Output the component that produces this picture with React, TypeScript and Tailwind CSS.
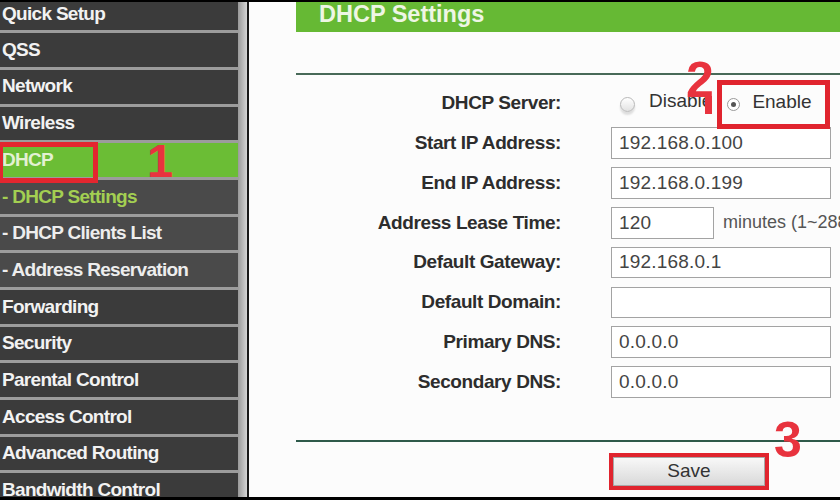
import React from 'react'

const font = { fontFamily: '"Liberation Sans", Arial, sans-serif' }

type NavItem = { label: string; kind: 'main' | 'active' | 'sub' | 'subActive' }

const navItems: NavItem[] = [
  { label: 'Quick Setup', kind: 'main' },
  { label: 'QSS', kind: 'main' },
  { label: 'Network', kind: 'main' },
  { label: 'Wireless', kind: 'main' },
  { label: 'DHCP', kind: 'active' },
  { label: '- DHCP Settings', kind: 'subActive' },
  { label: '- DHCP Clients List', kind: 'sub' },
  { label: '- Address Reservation', kind: 'sub' },
  { label: 'Forwarding', kind: 'main' },
  { label: 'Security', kind: 'main' },
  { label: 'Parental Control', kind: 'main' },
  { label: 'Access Control', kind: 'main' },
  { label: 'Advanced Routing', kind: 'main' },
  { label: 'Bandwidth Control', kind: 'main' },
]

const fields = [
  { label: 'Start IP Address:', value: '192.168.0.100' },
  { label: 'End IP Address:', value: '192.168.0.199' },
  { label: 'Address Lease Time:', value: '120', lease: true },
  { label: 'Default Gateway:', value: '192.168.0.1' },
  { label: 'Default Domain:', value: '' },
  { label: 'Primary DNS:', value: '0.0.0.0' },
  { label: 'Secondary DNS:', value: '0.0.0.0' },
]

function NavRow({ item, first }: { item: NavItem; first: boolean }) {
  const bg =
    item.kind === 'active'
      ? 'bg-[#6bbd35] text-[#e3f1d2]'
      : item.kind === 'sub'
        ? 'bg-[#4a4a4a] text-[#ededed]'
        : item.kind === 'subActive'
          ? 'bg-[#4a4a4a] text-[#a3cf52]'
          : 'bg-[#3b3b3b] text-[#f2f2f2]'
  return (
    <div
      className={`shrink-0 flex items-center box-border border-b-[3px] border-[#9c9c9c] pl-[2px] whitespace-nowrap font-bold text-[19px] tracking-[-0.7px] ${bg} ${
        first ? 'h-[31.2px] pb-[4px]' : 'h-[36.7px]'
      }`}
    >
      {item.label}
    </div>
  )
}

function Field({ label, value, lease }: { label: string; value: string; lease?: boolean }) {
  return (
    <>
      <div className="flex items-center justify-end h-[31.5px] font-bold text-[19px] tracking-[-0.4px] text-[#2d2d2d] whitespace-nowrap">
        {label}
      </div>
      <div className="flex items-center h-[31.5px] whitespace-nowrap">
        <div
          className={`shrink-0 h-[31.5px] box-border border border-[#a3a3a3] bg-white flex items-center pl-[7px] text-[19px] tracking-[0.2px] text-[#444] ${
            lease ? 'w-[103px]' : 'w-[220px]'
          }`}
        >
          {value}
        </div>
        {lease && <span className="ml-[9px] text-[18px] text-[#555]">minutes (1~2880)</span>}
      </div>
    </>
  )
}

export default function App() {
  return (
    <div className="relative w-[840px] h-[500px] overflow-hidden bg-[#fcfcfc] flex flex-col" style={font}>
      <div className="h-[2px] bg-black shrink-0" />

      <div className="flex flex-1 min-h-0">
        <aside className="w-[238px] shrink-0 flex flex-col overflow-hidden bg-[#3b3b3b]">
          {navItems.map((item, i) => (
            <NavRow key={item.label} item={item} first={i === 0} />
          ))}
        </aside>
        <div className="w-[9px] shrink-0 bg-gradient-to-r from-[#9a9a9a] to-[#d6d6d6]" />
        <div className="w-[1.5px] shrink-0 bg-[#1a1a1a]" />

        <main className="flex-1 min-w-0 pl-[47.5px] flex flex-col">
          <div className="shrink-0 h-[30px] bg-[#66b934] flex items-center pl-[23px] pb-[5px] font-bold text-[23.5px] text-[#eef6e4] whitespace-nowrap">
            DHCP Settings
          </div>
          <div className="shrink-0 mt-[40.7px] h-[2px] bg-[#486a58]" />

          <div className="mt-[13px] grid grid-cols-[265px_1fr] gap-x-[50px] gap-y-[8.3px]">
            <div className="flex items-center justify-end h-[31.5px] font-bold text-[19px] tracking-[-0.4px] text-[#2d2d2d]">
              DHCP Server:
            </div>
            <div className="flex items-center h-[31.5px] whitespace-nowrap text-[19px] text-[#333]">
              <span className="ml-[9px] mt-[2px] w-[15px] h-[15px] rounded-full border border-[#b8b8b8] bg-gradient-to-b from-white to-[#e2e2e2] shadow-[0_3px_2px_rgba(0,0,0,0.12)]" />
              <span className="ml-[14px] -mt-[4px]">Disable</span>
              <span className="ml-[15px] mt-[2px] w-[13px] h-[13px] rounded-full border border-[#9a9a9a] bg-white flex items-center justify-center">
                <span className="w-[5px] h-[5px] rounded-full bg-[#555]" />
              </span>
              <span className="ml-[12px] -mt-[2px]">Enable</span>
            </div>
            {fields.map((f) => (
              <Field key={f.label} {...f} />
            ))}
          </div>

          <div className="shrink-0 mt-[42px] h-[2px] bg-[#2e5a4a]" />

          <div className="shrink-0 mt-[11.2px] ml-[313px] w-[160px] h-[37px] box-border border-[4px] border-[#e0242e] flex">
            <button className="flex-1 border border-[#a8a8a8] bg-gradient-to-b from-[#f8f8f8] to-[#d9d9d9] text-[19px] text-[#333] flex items-center justify-center">
              Save
            </button>
          </div>
        </main>
      </div>

      <div className="h-[3px] bg-black shrink-0" />

      {/* annotations */}
      <div className="absolute left-[-2px] top-[142px] w-[100px] h-[41px] border-[5px] border-[#e3262f]" />
      <div className="absolute left-[147px] top-[137px] text-[47px] leading-none font-bold text-[#e8333e]">1</div>

      <div className="absolute left-[717px] top-[80px] w-[113px] h-[49px] border-[5px] border-[#e0242e]" />
      <div className="absolute left-[686px] top-[55px] text-[50px] leading-none font-bold text-[#e8333e]">2</div>
      <div className="absolute left-[705px] top-[96px] w-[7px] h-[18px] bg-[#e8333e]" />

      <div className="absolute left-[774px] top-[415px] text-[50px] leading-none font-bold text-[#e8333e]">3</div>
    </div>
  )
}
